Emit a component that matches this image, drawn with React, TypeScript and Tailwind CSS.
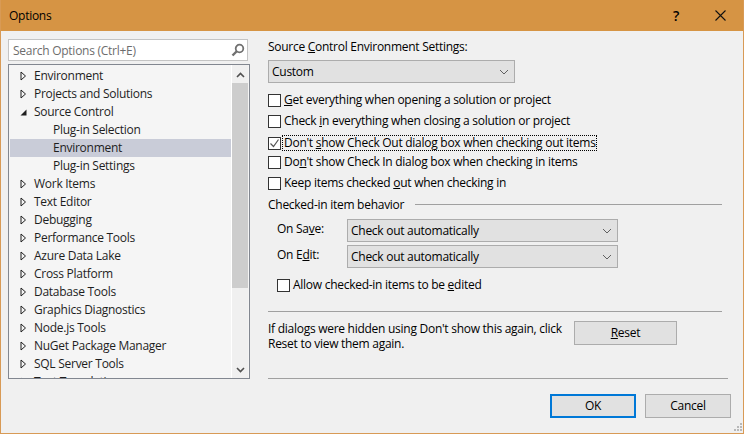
import React from "react";

const items = [
  { label: "Environment", arrow: "closed" },
  { label: "Projects and Solutions", arrow: "closed" },
  { label: "Source Control", arrow: "open" },
  { label: "Plug-in Selection", child: true },
  { label: "Environment", child: true, selected: true },
  { label: "Plug-in Settings", child: true },
  { label: "Work Items", arrow: "closed" },
  { label: "Text Editor", arrow: "closed" },
  { label: "Debugging", arrow: "closed" },
  { label: "Performance Tools", arrow: "closed" },
  { label: "Azure Data Lake", arrow: "closed" },
  { label: "Cross Platform", arrow: "closed" },
  { label: "Database Tools", arrow: "closed" },
  { label: "Graphics Diagnostics", arrow: "closed" },
  { label: "Node.js Tools", arrow: "closed" },
  { label: "NuGet Package Manager", arrow: "closed" },
  { label: "SQL Server Tools", arrow: "closed" },
  { label: "Text Templating", arrow: "closed" },
];

const Chevron = ({ up = false }: { up?: boolean }) => (
  <svg width="9" height="6" viewBox="0 0 9 6" className={up ? "rotate-180" : ""}>
    <path d="M1 1l3.5 3.5L8 1" fill="none" stroke="#505050" strokeWidth="1.6" />
  </svg>
);

const TreeRow = ({ label, arrow, child, selected }: any) => (
  <div className={`flex h-[18px] shrink-0 items-center ${selected ? "bg-[#c9ccd8]" : ""}`}>
    <div className="flex w-[24px] shrink-0 justify-end pr-[7px]">
      {arrow === "closed" && (
        <svg width="7" height="10" viewBox="0 0 7 10">
          <path d="M1 1l4.5 4L1 9z" fill="none" stroke="#1e1e1e" />
        </svg>
      )}
      {arrow === "open" && (
        <svg width="7" height="7" viewBox="0 0 7 7">
          <path d="M6.5 .5v6h-6z" fill="#1e1e1e" />
        </svg>
      )}
    </div>
    <span className={`text-[#1e1e1e] ${child ? "pl-[19px]" : ""}`}>{label}</span>
  </div>
);

const Combo = ({ text, className }: { text: string; className: string }) => (
  <div className={`flex items-center justify-between border border-[#acacac] bg-[#e1e1e1] pl-[3px] pr-[3px] ${className}`}>
    <span>{text}</span>
    <svg width="10" height="6" viewBox="0 0 10 6" className="mr-[2px]">
      <path d="M1 1l4 4 4-4" fill="none" stroke="#606060" />
    </svg>
  </div>
);

const Check = ({ children, checked, focus, className = "" }: any) => (
  <div className={`flex items-center ${className}`}>
    <div className="flex h-[13px] w-[13px] shrink-0 items-center justify-center border border-[#333] bg-white">
      {checked && (
        <svg width="11" height="11" viewBox="0 0 11 11">
          <path d="M1.5 5.5l3 3 5-7" fill="none" stroke="#555" strokeWidth="1.2" />
        </svg>
      )}
    </div>
    <span className={`ml-[2px] pl-px leading-[14px] ${focus ? "outline-1 outline-dotted outline-black" : ""}`}>{children}</span>
  </div>
);

export default function App() {
  return (
    <div className="relative flex h-[434px] w-[744px] flex-col overflow-hidden border-x border-b border-[#d89a55] bg-[#f0f0f0] font-['Open_Sans',sans-serif] text-[12px] leading-[16px] tracking-[-0.27px] text-black">
      <header className="-mx-px flex h-[31px] shrink-0 items-center bg-[#d69444] pl-[9px]">
        <span className="flex-1 text-[12px]">Options</span>
        <span className="mr-[36px] text-[14px] font-semibold">?</span>
        <svg width="11" height="11" viewBox="0 0 11 11" className="mr-[18px]">
          <path d="M.5.5l10 10M10.5.5l-10 10" stroke="#111" strokeWidth="1.1" />
        </svg>
      </header>

      <main className="flex flex-1">
        {/* left: search and tree */}
        <aside className="ml-[7px] mt-[8px] w-[242px] shrink-0">
          <div className="flex h-[22px] w-[240px] items-center justify-between border border-[#c4c4c4] bg-white pl-[4px] pr-[2px] text-[#6d6d6d]">
            <span className="pt-[2px]">Search Options (Ctrl+E)</span>
            <svg width="14" height="14" viewBox="0 0 14 14">
              <circle cx="8.5" cy="5.5" r="3.8" fill="none" stroke="#707070" strokeWidth="1.8" />
              <path d="M6 8l-4.5 4.5" stroke="#707070" strokeWidth="2.4" />
            </svg>
          </div>
          <div className="mt-[3px] flex h-[315px] w-[242px] border border-[#828790] bg-[#f5f5f5]">
            <div className="flex h-full w-[222px] flex-col overflow-hidden pl-px pt-[2px]">
              {items.map((item, i) => (
                <TreeRow key={i} {...item} />
              ))}
            </div>
            <div className="flex w-[17px] flex-col border-l border-white bg-[#f0f0f0]">
              <div className="flex h-[18px] items-center justify-center pt-[2px]">
                <Chevron up />
              </div>
              <div className="h-[205px] bg-[#cdcdcd]" />
              <div className="flex-1" />
              <div className="flex h-[17px] items-center justify-center">
                <Chevron />
              </div>
            </div>
          </div>
        </aside>

        {/* right: settings */}
        <section className="ml-[18px] flex-1 pt-[8px]">
          <label className="block h-[16px]">Source <u>C</u>ontrol Environment Settings:</label>
          <Combo text="Custom" className="mt-[5px] h-[23px] w-[247px]" />
          <Check className="mt-[10px] h-[14px]"><u>G</u>et everything when opening a solution or project</Check>
          <Check className="mt-[7px] h-[14px]">Check <u>i</u>n everything when closing a solution or project</Check>
          <Check className="mt-[8px] h-[14px]" checked focus>Don't <u>s</u>how Check Out dialog box when checking out items</Check>
          <Check className="mt-[5px] h-[14px]">Do<u>n</u>'t show Check In dialog box when checking in items</Check>
          <Check className="mt-[7px] h-[14px]">Keep items checked <u>o</u>ut when checking in</Check>

          <div className="mt-[6px] flex h-[16px] w-[454px] items-center">
            <span className="mr-[11px] shrink-0 pt-[2px]">Checked-in item behavior</span>
            <div className="h-px flex-1 bg-[#a0a0a0]" />
          </div>
          <div className="ml-[9px] mt-[7px] flex items-start">
            <span className="w-[70px] pt-[2px]">On Sa<u>v</u>e:</span>
            <Combo text="Check out automatically" className="h-[23px] w-[271px]" />
          </div>
          <div className="ml-[9px] mt-[3px] flex items-start">
            <span className="w-[70px] pt-[2px]">On E<u>d</u>it:</span>
            <Combo text="Check out automatically" className="h-[23px] w-[271px]" />
          </div>
          <Check className="ml-[9px] mt-[10px] h-[14px]">Allow checked-in items to be <u>e</u>dited</Check>

          <div className="mt-[19px] h-px w-[454px] bg-[#a0a0a0]" />
          <div className="mt-[9px] flex h-[24px] w-[409px] items-start justify-between">
            <p className="w-[300px] leading-[15px]">
              If dialogs were hidden using Don't show this again, click Reset to view them again.
            </p>
            <button className="h-[24px] w-[103px] border border-[#acacac] bg-[#e1e1e1]"><u>R</u>eset</button>
          </div>
          <div className="mt-[33px] h-px w-[460px] bg-[#a0a0a0]" />
          <div className="mt-[15px] flex w-[463px] justify-end gap-[9px]">
            <button className="h-[24px] w-[86px] border-2 border-[#0078d7] bg-[#e1e1e1]">OK</button>
            <button className="h-[24px] w-[86px] border border-[#acacac] bg-[#e1e1e1]">Cancel</button>
          </div>
        </section>
      </main>

      {/* resize grip */}
      <svg width="10" height="10" viewBox="0 0 10 10" className="absolute bottom-[1px] right-[1px]">
        <path d="M8 1h2v2H8zM5 4h2v2H5zM8 4h2v2H8zM2 7h2v2H2zM5 7h2v2H5zM8 7h2v2H8z" fill="#b8b8b8" />
      </svg>
    </div>
  );
}
